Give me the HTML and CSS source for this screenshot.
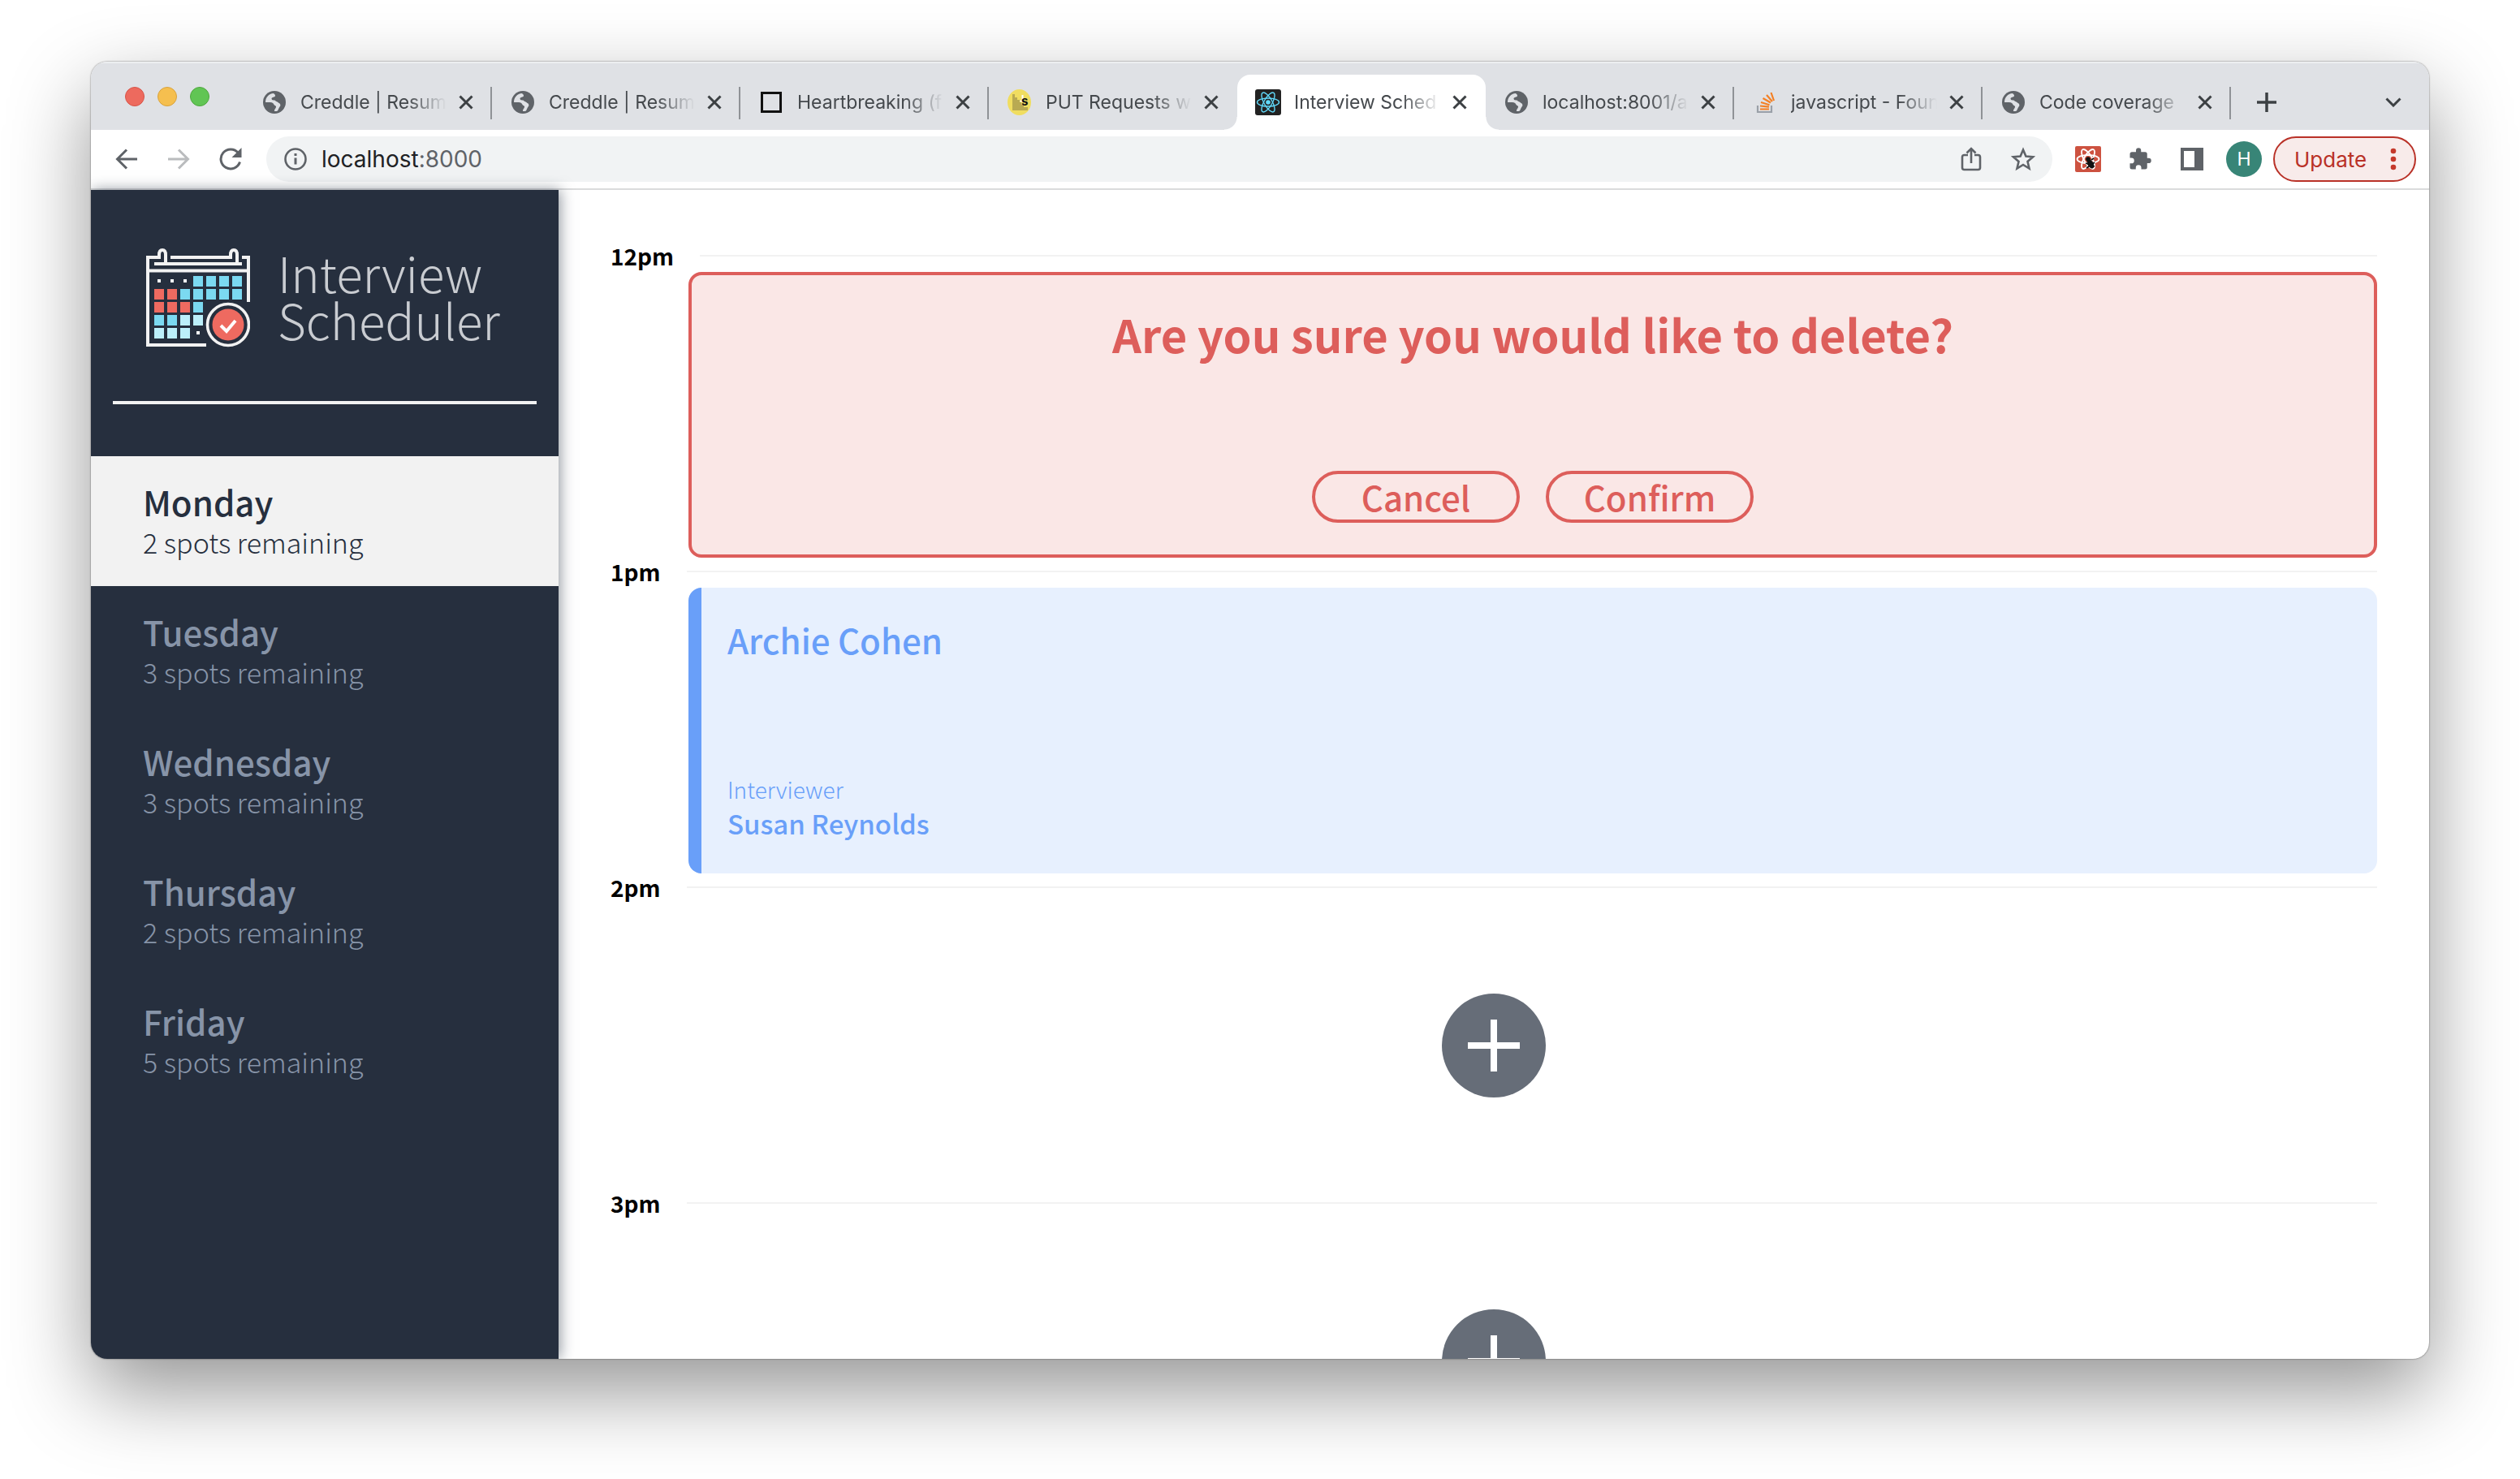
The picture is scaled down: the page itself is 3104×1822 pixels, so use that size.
FILE: index.html
```html
<!DOCTYPE html>
<html lang="en">
<head>
<meta charset="utf-8">
<title>Interview Scheduler</title>
<link rel="stylesheet" href="styles.css">
</head>
<body>
<svg width="0" height="0" class="sprite" aria-hidden="true">
  <symbol id="globe" viewBox="0 0 28 28"><circle cx="14" cy="14" r="14" fill="#5f6368"/><path d="M13 3C7 3.500 3 8 3 14c4 0 9-.5 10 2 .5 2 2 1.500 3 3 .5 2-2 3-2 6 1 .2 3 0 4-.5 1-1.500 1-3 2.500-5 1.500-1 1-4-1-4.500-1-2-4-1.500-5-3.500-2 0-4 0-4-2.500C12 7 15 8 15 6c0-1.500-1-2-2-3z" fill="#dfe1e5"/><path d="M3 15h6c1 3 4 3 4 5v5C7 24.500 3.500 20 3 15z" fill="#5f6368"/></symbol>
  <symbol id="close" viewBox="0 0 18 18"><path d="M1.500 1.500l15 15M16.500 1.500l-15 15" stroke="#3c4043" stroke-width="3" fill="none"/></symbol>
  <symbol id="plus" viewBox="0 0 128 128"><circle cx="64" cy="64" r="64" fill="#666d78"/><path d="M64 32v64M32 64h64" stroke="#fff" stroke-width="8"/></symbol>
</svg>
<div class="window">
  <header class="tabstrip">
    <div class="lights"><i class="light light--red"></i><i class="light light--yellow"></i><i class="light light--green"></i></div>
    <nav class="tabs">
      <div class="tab"><svg class="tab__icon"><use href="#globe"/></svg><span class="tab__title">Creddle | Resum</span><button class="tab__close" aria-label="Close tab"><svg><use href="#close"/></svg></button></div>
      <div class="tab"><svg class="tab__icon"><use href="#globe"/></svg><span class="tab__title">Creddle | Resum</span><button class="tab__close" aria-label="Close tab"><svg><use href="#close"/></svg></button></div>
      <div class="tab"><svg class="tab__icon" viewBox="0 0 28 28"><rect x="2.500" y="2.500" width="23" height="23" fill="none" stroke="#111" stroke-width="3"/></svg><span class="tab__title">Heartbreaking (f</span><button class="tab__close" aria-label="Close tab"><svg><use href="#close"/></svg></button></div>
      <div class="tab tab--before"><svg class="tab__icon tab__icon--large" viewBox="0 0 32 32"><ellipse cx="15.500" cy="16" rx="14.500" ry="16" fill="#f0dd60"/><path d="M7 6h3v4h3v3h3v3h2v3h3v3h5v4H7z" fill="#b9aa52"/><path d="M19.500 7v7q-1 1.500-3 0" stroke="#fff" stroke-width="2" fill="none"/><text x="18" y="20" class="fav-s">s</text></svg><span class="tab__title">PUT Requests w</span><button class="tab__close" aria-label="Close tab"><svg><use href="#close"/></svg></button></div>
      <div class="tab tab--active"><svg class="tab__icon tab__icon--large" viewBox="0 0 32 32"><rect width="32" height="32" rx="3" fill="#222"/><g fill="none" stroke="#61dafb" stroke-width="1.400"><ellipse cx="16" cy="16" rx="13.500" ry="5"/><ellipse cx="16" cy="16" rx="13.500" ry="5" transform="rotate(60 16 16)"/><ellipse cx="16" cy="16" rx="13.500" ry="5" transform="rotate(120 16 16)"/></g><circle cx="16" cy="16" r="2.800" fill="#61dafb"/></svg><span class="tab__title">Interview Sched</span><button class="tab__close" aria-label="Close tab"><svg><use href="#close"/></svg></button></div>
      <div class="tab"><svg class="tab__icon"><use href="#globe"/></svg><span class="tab__title">localhost:8001/a</span><button class="tab__close" aria-label="Close tab"><svg><use href="#close"/></svg></button></div>
      <div class="tab"><svg class="tab__icon" viewBox="0 0 28 28"><path d="M5 18v8h17v-8" fill="none" stroke="#9aa0a8" stroke-width="2.200"/><path d="M8 22.500h11M8 18.500l11 1.200M9 14l10.500 3.200M11.500 9l9.500 5.500M16 5l7 8M21.500 2l3.500 10" stroke="#f48024" stroke-width="2.200" fill="none"/></svg><span class="tab__title">javascript - Foun</span><button class="tab__close" aria-label="Close tab"><svg><use href="#close"/></svg></button></div>
      <div class="tab"><svg class="tab__icon"><use href="#globe"/></svg><span class="tab__title">Code coverage</span><button class="tab__close" aria-label="Close tab"><svg><use href="#close"/></svg></button></div>
    </nav>
    <button class="icon-btn icon-btn--new" aria-label="New tab"><svg width="24" height="24" viewBox="0 0 24 24"><path d="M12 0v24M0 12h24" stroke="#3c4043" stroke-width="3.500"/></svg></button>
    <button class="icon-btn icon-btn--list" aria-label="Search tabs"><svg width="20" height="12" viewBox="0 0 20 12"><path d="M1.500 1.500L10 10l8.500-8.500" stroke="#3c4043" stroke-width="3" fill="none"/></svg></button>
  </header>
  <div class="toolbar">
    <button class="icon-btn" aria-label="Back"><svg width="28" height="26" viewBox="0 0 28 26"><path d="M27 13H3M14 1.500L2.500 13 14 24.500" stroke="#5f6368" stroke-width="3" fill="none"/></svg></button>
    <button class="icon-btn" aria-label="Forward"><svg width="28" height="26" viewBox="0 0 28 26"><path d="M1 13h24M14 1.500L25.500 13 14 24.500" stroke="#babcbe" stroke-width="3" fill="none"/></svg></button>
    <button class="icon-btn" aria-label="Reload"><svg width="28" height="28" viewBox="0 0 28 28"><path d="M23.500 6.500A12 12 0 1 0 25.500 17.500" stroke="#5f6368" stroke-width="3" fill="none"/><path d="M27.500 0v12h-12z" fill="#5f6368"/></svg></button>
    <div class="omnibox">
      <svg width="28" height="28" viewBox="0 0 28 28"><circle cx="14" cy="14" r="12.500" fill="none" stroke="#5f6368" stroke-width="2.600"/><path d="M14 12.500v8M14 7v3" stroke="#5f6368" stroke-width="3"/></svg>
      <p class="omnibox__url">localhost<span>:8000</span></p>
      <button class="icon-btn" aria-label="Share"><svg width="26" height="30" viewBox="0 0 26 30"><path d="M9 10H4.500Q2 10 2 12.500v13Q2 28 4.500 28h17q2.500 0 2.500-2.500v-13Q24 10 21.500 10H17M13 20V3M7.500 7.500L13 2l5.500 5.500" stroke="#5f6368" stroke-width="2.600" fill="none"/></svg></button>
      <button class="icon-btn" aria-label="Bookmark"><svg width="30" height="30" viewBox="0 0 30 30"><path d="M15 3.500l3.400 8 8.600.8-6.500 5.700 2 8.500-7.500-4.500-7.500 4.500 2-8.500L3 12.300l8.600-.8z" stroke="#5f6368" stroke-width="2.600" fill="none"/></svg></button>
    </div>
    <button class="icon-btn" aria-label="React Developer Tools"><svg width="32" height="32" viewBox="0 0 32 32"><rect width="32" height="32" rx="2" fill="#cd5240"/><g fill="none" stroke="#fff" stroke-width="1.800"><ellipse cx="16" cy="16" rx="13.500" ry="5"/><ellipse cx="16" cy="16" rx="13.500" ry="5" transform="rotate(60 16 16)"/><ellipse cx="16" cy="16" rx="13.500" ry="5" transform="rotate(120 16 16)"/></g><circle cx="16" cy="16" r="2.800" fill="#111"/><ellipse cx="19" cy="22" rx="3.500" ry="6" fill="#111" transform="rotate(-30 19 22)"/><path d="M13 21l11 4M14 27l10-7M20 17l3-2" stroke="#111" stroke-width="1.600"/></svg></button>
    <button class="icon-btn" aria-label="Extensions"><svg width="30" height="30" viewBox="0 0 24 24"><path d="M20.500 11H19V7a2 2 0 0 0-2-2h-4V3.500a2.500 2.500 0 0 0-5 0V5H4a2 2 0 0 0-2 2v3.800h1.500a2.700 2.700 0 0 1 0 5.400H2V20a2 2 0 0 0 2 2h3.800v-1.500a2.700 2.700 0 0 1 5.400 0V22H17a2 2 0 0 0 2-2v-4h1.500a2.500 2.500 0 0 0 0-5z" fill="#5f6368"/></svg></button>
    <button class="icon-btn" aria-label="Side panel"><svg width="28" height="28" viewBox="0 0 28 28"><path d="M0 0h28v28H0zM4 4v20h13V4z" fill="#5f6368" fill-rule="evenodd"/></svg></button>
    <button class="icon-btn" aria-label="Profile"><span class="avatar">H</span></button>
    <button class="update">Update<svg width="8" height="28" viewBox="0 0 8 28"><g fill="#c5392b"><circle cx="4" cy="4" r="3.300"/><circle cx="4" cy="14" r="3.300"/><circle cx="4" cy="24" r="3.300"/></g></svg></button>
  </div>
  <div class="layout">
    <section class="sidebar">
      <div class="logo">
        <svg class="logo__mark" viewBox="0 0 128 122">
          <g fill="none" stroke="#f2f2f2" stroke-width="4"><path d="M24 19V8q0-6-4-6t-4 6v3H2v108h72M126 66V11h-8M112 19V8q0-6-4-6t-4 6v3H30M10 19h108M2 27.500h124"/></g>
          <g fill="#7bd9f1"><path d="M58 34h12v13H58zM74 34h12v13H74zM90 34h12v13H90zM106 34h12v13h-12zM42 50h12v13H42zM58 50h12v13H58zM74 50h12v13H74zM90 50h12v13H90zM106 50h12v13h-12zM58 66h12v13H58zM10 82h12v13H10zM26 82h12v13H26z"/></g>
          <g fill="#bceffa"><path d="M42 82h12v13H42zM58 82h12v13H58zM10 98h12v13H10zM26 98h12v13H26zM42 98h12v13H42z"/></g>
          <g fill="#ee6a60"><path d="M10 50h12v13H10zM26 50h12v13H26zM10 66h12v13H10zM26 66h12v13H26zM42 66h12v13H42z"/><circle cx="101" cy="94" r="19.500"/></g>
          <path d="M14 38h4v4h-4zM30 38h4v4h-4zM46 38h4v4h-4zM62 102h4v4h-4z" fill="#fff"/>
          <circle cx="101" cy="94" r="25.500" fill="none" stroke="#f2f2f2" stroke-width="3.600"/>
          <path d="M92 95l7 7 11-13" fill="none" stroke="#fff" stroke-width="4"/>
        </svg>
        <h1 class="logo__text">Interview<br>Scheduler</h1>
      </div>
      <hr class="sidebar__rule">
      <nav>
        <ul class="days">
          <li><a href="#" class="day day--selected"><h2>Monday</h2><h3>2 spots remaining</h3></a></li>
          <li><a href="#" class="day"><h2>Tuesday</h2><h3>3 spots remaining</h3></a></li>
          <li><a href="#" class="day"><h2>Wednesday</h2><h3>3 spots remaining</h3></a></li>
          <li><a href="#" class="day"><h2>Thursday</h2><h3>2 spots remaining</h3></a></li>
          <li><a href="#" class="day"><h2>Friday</h2><h3>5 spots remaining</h3></a></li>
        </ul>
      </nav>
    </section>
    <main class="schedule">
      <article class="slot">
        <header class="slot__time"><h4>12pm</h4><hr></header>
        <div class="card card--confirm">
          <h1>Are you sure you would like to delete?</h1>
          <div class="actions"><button>Cancel</button><button>Confirm</button></div>
        </div>
      </article>
      <article class="slot">
        <header class="slot__time"><h4>1pm</h4><hr></header>
        <div class="card card--show">
          <h2>Archie Cohen</h2>
          <div><h4>Interviewer</h4><h3>Susan Reynolds</h3></div>
        </div>
      </article>
      <article class="slot">
        <header class="slot__time"><h4>2pm</h4><hr></header>
        <div class="empty"><button aria-label="Add"><svg><use href="#plus"/></svg></button></div>
      </article>
      <article class="slot">
        <header class="slot__time"><h4>3pm</h4><hr></header>
        <div class="empty"><button aria-label="Add"><svg><use href="#plus"/></svg></button></div>
      </article>
    </main>
  </div>
</div>
</body>
</html>
```

FILE: styles.css
```css
* { box-sizing: border-box; margin: 0; padding: 0; }
body {
  height: 100vh;
  padding: 76px 112px 148px;
  background: #fff;
  font-family: "Noto Sans CJK JP", "Open Sans", sans-serif;
  overflow: hidden;
}
h1, h2, h3, h4 { font-weight: 400; }
button { border: 0; background: none; font: inherit; color: inherit; }
ul { list-style: none; }
a { text-decoration: none; color: inherit; }
hr { border: 0; }
svg { display: block; flex: none; }
.sprite { position: absolute; }

.window {
  display: flex;
  flex-direction: column;
  height: 100%;
  border-radius: 20px;
  overflow: hidden;
  background: #fff;
  box-shadow: 0 0 2px rgba(0, 0, 0, .6), 0 40px 100px rgba(0, 0, 0, .42);
}

.tabstrip {
  display: flex;
  flex: none;
  height: 84px;
  padding: 16px 24px 0 42px;
  background: #dfe1e5;
  font-family: Inter, "Liberation Sans", sans-serif;
  box-shadow: inset 0 2px 0 #eceef0;
}
.lights { display: flex; flex: none; gap: 16px; width: 146px; padding-top: 15px; }
.light { width: 24px; height: 24px; border-radius: 50%; }
.light--red { background: #ed6a5e; border: 1px solid #d75448; }
.light--yellow { background: #f5bf4f; border: 1px solid #d9a23c; }
.light--green { background: #61c554; border: 1px solid #4fa73f; }
.tabs { display: flex; flex: 0 1 2448px; min-width: 0; }
.tab {
  position: relative;
  display: flex;
  flex: 1;
  min-width: 0;
  align-items: center;
  padding: 0 20px 0 22px;
  color: #45494d;
  font-size: 23px;
}
.tab::after { content: ""; position: absolute; right: 0; top: 15px; width: 2px; height: 40px; background: #8f9296; }
.tab--active { background: #fff; border-radius: 16px 16px 0 0; }
.tab--active::before, .tab--active::after {
  content: "";
  position: absolute;
  top: auto;
  bottom: 0;
  left: -16px;
  width: 16px;
  height: 16px;
  background: radial-gradient(circle at 0 0, transparent 15px, #fff 16px);
}
.tab--active::after { left: auto; right: -16px; background: radial-gradient(circle at 100% 0, transparent 15px, #fff 16px); }
.tab--before::after { display: none; }
.tab__icon { width: 28px; height: 28px; margin: 0 2px; }
.tab__icon--large { width: 32px; height: 32px; margin: 0; }
.fav-s { font: bold 15px Inter, sans-serif; fill: #111; }
.tab__title {
  flex: 1;
  margin: 0 12px 0 16px;
  overflow: hidden;
  white-space: nowrap;
  -webkit-mask-image: linear-gradient(to left, transparent, #000 48px);
  mask-image: linear-gradient(to left, transparent, #000 48px);
}
.tab__close svg { width: 18px; height: 18px; margin: 0 3px; }
.icon-btn { display: flex; flex: none; justify-content: center; align-items: center; width: 64px; }
.icon-btn--new { margin-left: 12px; }
.icon-btn--list { margin-left: auto; margin-right: -12px; }

.toolbar {
  display: flex;
  flex: none;
  height: 74px;
  padding: 8px 16px 8px 12px;
  border-bottom: 2px solid #dadbdc;
  font-family: Inter, "Liberation Sans", sans-serif;
}
.omnibox {
  display: flex;
  flex: 1;
  align-items: center;
  margin: 0 12px;
  padding: 0 4px 0 22px;
  border-radius: 28px;
  background: #f1f3f4;
}
.omnibox__url { flex: 1; margin-left: 18px; font-size: 28px; color: #202124; }
.omnibox__url span { color: #5f6368; }
.avatar { width: 44px; height: 44px; border-radius: 50%; background: #388577; color: #fff; font-size: 23px; line-height: 44px; }
.update {
  display: flex;
  align-items: center;
  justify-content: space-between;
  width: 176px;
  margin-left: 4px;
  padding: 0 22px 0 24px;
  border: 2px solid #b93127;
  border-radius: 28px;
  background: #f8ebea;
  color: #b93127;
  font-size: 26px;
}

.layout { display: flex; flex: 1; min-height: 0; }
.sidebar {
  width: 20%;
  background: #262f3e;
  box-shadow: 2px 0 16px rgba(34, 45, 62, .5);
}
.logo { display: flex; gap: 34px; padding: 72px 48px 66px 68px; }
.logo__mark { width: 128px; height: 122px; }
.logo__text { color: #c9ccd1; font-size: 60px; font-weight: 300; line-height: 58px; }
.sidebar__rule { height: 4px; margin: 0 27px 64px; background: #f2f2f2; }
.day { display: block; height: 160px; padding: 28px 64px; color: #8794a8; }
.day--selected { background: #f2f2f2; color: #262f3e; }
.day h2 { font-size: 42px; font-weight: 500; line-height: 56px; }
.day h3 { font-size: 34px; line-height: 44px; font-weight: 300; }

.schedule { flex: 1; padding: 64px 64px 0; overflow: hidden; }
.slot__time { display: flex; align-items: center; gap: 32px; height: 34px; margin-bottom: 3px; }
.slot__time h4 { color: #000; font-size: 28px; font-weight: 700; line-height: 34px; }
.slot__time hr { flex: 1; height: 2px; background: #f2f2f2; }
.card { display: flex; flex-direction: column; height: 352px; margin-left: 96px; border-radius: 16px; }
.card--confirm { align-items: center; justify-content: space-between; padding: 36px 32px 39px; border: 4px solid #dd5e5b; background: #fae7e6; color: #dd5e5b; }
.card--confirm h1 { font-size: 56px; font-weight: 700; line-height: 72px; }
.actions { display: flex; gap: 32px; }
.actions button { width: 256px; height: 64px; border: 4px solid #dd5e5b; border-radius: 32px; font-size: 42px; font-weight: 500; line-height: 54px; }
.card--show { justify-content: space-between; padding: 32px 32px 40px; border-left: 16px solid #699ff9; background: #e7f0fe; color: #699ff9; }
.card--show h2 { font-size: 42px; font-weight: 500; line-height: 64px; }
.card--show h4 { font-size: 28px; line-height: 40px; font-weight: 300; }
.card--show h3 { font-size: 33px; font-weight: 500; line-height: 44px; }
.empty { display: flex; align-items: center; justify-content: center; height: 352px; padding-bottom: 2px; }
.empty svg { width: 128px; height: 128px; }
```
